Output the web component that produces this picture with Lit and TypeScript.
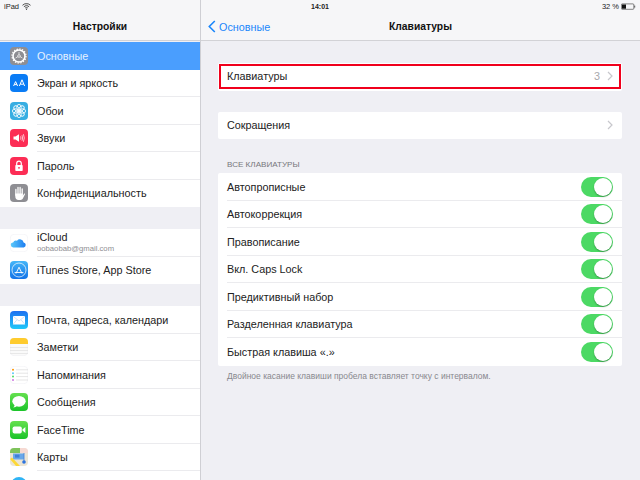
import { LitElement, html, css, svg } from "lit";
import { customElement } from "lit/decorators.js";

const gear = svg`<rect width="18" height="18" rx="4" fill="#8e8e93"/><circle cx="9" cy="9" r="6" fill="none" stroke="#fff" stroke-width="1.6"/><circle cx="9" cy="9" r="7" fill="none" stroke="#fff" stroke-width="1.2" stroke-dasharray="1.4 1.35"/><circle cx="9" cy="9" r="1.3" fill="none" stroke="#fff" stroke-width=".7"/><path d="M9 5v2.7M5.6 11l2.3-1.3M12.4 11l-2.3-1.3" stroke="#fff" stroke-width=".7"/>`;
const display = svg`<rect width="18" height="18" rx="4" fill="#0a7cf5"/><path d="M3.6 12 5.6 7.6 7.600 12M4.400 10.600h2.400M9.400 12 12 5.800 14.600 12M10.400 10.200h3.200" fill="none" stroke="#fff" stroke-width="1"/>`;
const wallpaper = svg`<rect width="18" height="18" rx="4" fill="#37aee2"/><g fill="none" stroke="#fff" stroke-width=".9"><ellipse cx="9" cy="5.400" rx="2.200" ry="3"/><ellipse cx="9" cy="12.600" rx="2.200" ry="3"/><ellipse cx="5.400" cy="9" rx="3" ry="2.200"/><ellipse cx="12.600" cy="9" rx="3" ry="2.200"/><ellipse cx="6.400" cy="6.400" rx="2.200" ry="3" transform="rotate(-45 6.400 6.400)"/><ellipse cx="11.600" cy="6.400" rx="2.200" ry="3" transform="rotate(45 11.600 6.400)"/><ellipse cx="6.400" cy="11.600" rx="2.200" ry="3" transform="rotate(45 6.400 11.600)"/><ellipse cx="11.600" cy="11.600" rx="2.200" ry="3" transform="rotate(-45 11.600 11.600)"/></g>`;
const sounds = svg`<rect width="18" height="18" rx="4" fill="#fc2d55"/><path d="M3.500 7.600h2L9 5.200v7.600L5.500 10.400h-2z" fill="#fff"/><path d="M10.600 7.400q.8 1.600 0 3.200M12 6.200q1.300 2.800 0 5.600M13.400 5.200q1.800 3.800 0 7.600" fill="none" stroke="#fff" stroke-width=".7"/>`;
const lock = svg`<rect width="18" height="18" rx="4" fill="#fc2d55"/><rect x="5.300" y="8" width="7.400" height="6" rx=".8" fill="#fff"/><path d="M6.700 8V6.400a2.300 2.300 0 0 1 4.600 0V8" fill="none" stroke="#fff" stroke-width="1.200"/><circle cx="9" cy="10.800" r=".9" fill="#fc2d55"/>`;
const hand = svg`<rect width="18" height="18" rx="4" fill="#8e8e93"/><g stroke="#fff" stroke-width="1.300" stroke-linecap="round"><path d="M5.900 5.500v5.500M8 3.400v6.500M10.100 3.400v6.500M12.200 5v5.500M6 11l-.1.200"/></g><path d="M5.300 9.500h7.500v2.200l1.300-2c.5-.6 1.200 0 .9.600l-2 4c-.5 1-1.300 1.700-2.500 1.700H8.500c-2 0-3.200-1.400-3.200-3.500z" fill="#fff"/>`;
const cloud = svg`<defs><linearGradient id="cl" x1="0" x2="1"><stop offset="0" stop-color="#5ac8fa"/><stop offset="1" stop-color="#1c7cf0"/></linearGradient></defs><rect x=".25" y=".25" width="17.500" height="17.500" rx="4" fill="#fff" stroke="#ececf0" stroke-width=".5"/><path d="M3.500 13.400a2.500 2.500 0 0 1-.4-5A3.200 3.200 0 0 1 7 6.800a3.700 3.700 0 0 1 6.600 1.700 2.500 2.500 0 0 1 .2 4.900z" fill="url(#cl)"/>`;
const store = svg`<defs><linearGradient id="st" x1="0" x2="0" y1="0" y2="1"><stop offset="0" stop-color="#45b6f8"/><stop offset="1" stop-color="#1273e8"/></linearGradient></defs><rect width="18" height="18" rx="4" fill="url(#st)"/><circle cx="9" cy="9" r="7" fill="none" stroke="#fff" stroke-width=".7"/><path d="M6 12.500 9 6.200l3 6.300M4.600 11.500h8.800" fill="none" stroke="#fff" stroke-width=".9"/>`;
const mail = svg`<defs><linearGradient id="ml" x1="0" x2="0" y1="0" y2="1"><stop offset="0" stop-color="#1d70f0"/><stop offset="1" stop-color="#1ec9fa"/></linearGradient></defs><rect width="18" height="18" rx="4" fill="url(#ml)"/><rect x="3" y="5" width="12" height="8.500" rx=".6" fill="#fff"/><path d="M3.200 5.300 9 10l5.800-4.700M3.200 13.200 7 8.800M14.800 13.200 11 8.800" fill="none" stroke="#a9cff5" stroke-width=".6"/>`;
const notes = svg`<rect x=".25" y=".25" width="17.500" height="17.500" rx="4" fill="#fafafa" stroke="#ececf0" stroke-width=".5"/><path d="M0 4a4 4 0 0 1 4-4h10a4 4 0 0 1 4 4v2H0z" fill="#fecb2e"/><path d="M0 9.500h18M0 12.500h18M0 15.500h18" stroke="#dcdcdc" stroke-width=".6"/>`;
const reminders = svg`<rect x=".25" y=".25" width="17.500" height="17.500" rx="4" fill="#fff" stroke="#ececf0" stroke-width=".5"/><circle cx="3" cy="3.800" r="1" fill="#ff9500"/><circle cx="3" cy="7.200" r="1" fill="#5ac8fa"/><circle cx="3" cy="10.600" r="1" fill="#4cd964"/><circle cx="3" cy="14" r="1" fill="#cc73e1"/><path d="M6 3.800h12M6 7.200h12M6 10.600h12M6 14h12" stroke="#d4d4d4" stroke-width=".6"/>`;
const messages = svg`<defs><linearGradient id="ms" x1="0" x2="0" y1="0" y2="1"><stop offset="0" stop-color="#65e04f"/><stop offset="1" stop-color="#1bc42a"/></linearGradient></defs><rect width="18" height="18" rx="4" fill="url(#ms)"/><ellipse cx="9" cy="8.300" rx="6.700" ry="5.400" fill="#fff"/><path d="M4.800 11.500q-.2 2-1.600 3 2.500-.1 4-1.700z" fill="#fff"/>`;
const facetime = svg`<defs><linearGradient id="ft" x1="0" x2="0" y1="0" y2="1"><stop offset="0" stop-color="#65e04f"/><stop offset="1" stop-color="#1bc42a"/></linearGradient></defs><rect width="18" height="18" rx="4" fill="url(#ft)"/><rect x="2.600" y="5.500" width="9.200" height="7" rx="1.800" fill="#fff"/><path d="M12.400 8.400 15.400 6v6l-3-2.400z" fill="#fff"/>`;
const maps = svg`<rect width="18" height="18" rx="4" fill="#ece5d4"/><path d="M0 4a4 4 0 0 1 4-4h6v5H0z" fill="#7ec35b"/><path d="M10 0h4a4 4 0 0 1 4 4v1h-8z" fill="#f6d9d2"/><path d="M3 5.500h11v6H3z" fill="#6aa8e8"/><path d="M5 6.600h4.500v3H5z" fill="#3f7fd8"/><path d="M2 9.500 10 18H6L0 11z" fill="#fdd835"/><path d="M14 5v8" stroke="#3f7fd8" stroke-width=".8"/><circle cx="14" cy="14" r="1.800" fill="#2d74e0"/>`;
const safari = svg`<rect width="18" height="18" rx="4" fill="#fff"/><circle cx="9" cy="9" r="8" fill="#2fb4f5"/>`;

type SideRow = { label: string; icon: unknown; sub?: string };
const groups: SideRow[][] = [
  [
    { label: "Основные", icon: gear },
    { label: "Экран и яркость", icon: display },
    { label: "Обои", icon: wallpaper },
    { label: "Звуки", icon: sounds },
    { label: "Пароль", icon: lock },
    { label: "Конфиденциальность", icon: hand },
  ],
  [
    { label: "iCloud", icon: cloud, sub: "oobaobab@gmail.com" },
    { label: "iTunes Store, App Store", icon: store },
  ],
  [
    { label: "Почта, адреса, календари", icon: mail },
    { label: "Заметки", icon: notes },
    { label: "Напоминания", icon: reminders },
    { label: "Сообщения", icon: messages },
    { label: "FaceTime", icon: facetime },
    { label: "Карты", icon: maps },
    { label: "", icon: safari },
  ],
];
const toggles = [
  "Автопрописные",
  "Автокоррекция",
  "Правописание",
  "Вкл. Caps Lock",
  "Предиктивный набор",
  "Разделенная клавиатура",
  "Быстрая клавиша «.»",
];
const chevron = html`<svg class="chev" width="6" height="10" viewBox="0 0 6 10"><path d="M1 1l4 4-4 4" fill="none" stroke="#c7c7cc" stroke-width="1.200"/></svg>`;

@customElement("app-root")
export class AppRoot extends LitElement {
  static styles = css`
    :host {
      display: grid;
      grid-template-columns: 200px 1fr;
      position: relative;
      width: 640px;
      height: 480px;
      overflow: hidden;
      font-family: "Liberation Sans", Arial, sans-serif;
      font-size: 10.800px;
      color: #222;
      background: #efeff4;
    }
    .status {
      position: absolute;
      inset: 0 0 auto 0;
      height: 13px;
      display: grid;
      grid-template-columns: 1fr auto 1fr;
      align-items: center;
      font-size: 7.500px;
      color: #222;
      padding: 0 4px;
    }
    .status .l { display: flex; align-items: center; gap: 3px; }
    .status .r { display: flex; align-items: center; justify-content: flex-end; gap: 2px; }
    .time { font-weight: 700; font-size: 7px; }
    .side {
      border-right: 1px solid #cfcfd4;
      box-sizing: border-box;
      width: 201px;
      background: #efeff4;
      display: flex;
      flex-direction: column;
      gap: 22px;
    }
    .head {
      height: 41px;
      box-sizing: border-box;
      background: #f6f6f8;
      border-bottom: 1px solid #d2d2d6;
      padding-top: 13px;
      display: grid;
      align-items: center;
      flex: none;
    }
    .side .head {
      text-align: center;
      font-weight: 700;
      font-size: 10.300px;
      color: #111;
      margin-bottom: -21px;
    }
    .title { font-weight: 700; font-size: 10.300px; color: #111; }
    .sgroup { background: #fff; flex: none; }
    .srow {
      height: 27.500px;
      box-sizing: border-box;
      display: flex;
      align-items: center;
      padding-left: 9.500px;
      gap: 9.500px;
      position: relative;
    }
    .srow.sel { background: #4a9efe; color: #e6f1ff; }
    .srow svg { flex: none; }
    .sep::after {
      content: "";
      position: absolute;
      left: 37px;
      right: 0;
      bottom: 0;
      height: 1px;
      background: #ebebee;
    }
    .two { display: flex; flex-direction: column; gap: 1px; line-height: 11px; }
    .sub { font-size: 7.700px; line-height: 9px; color: #8e8e93; }
    .main { min-width: 0; display: flex; flex-direction: column; margin-left: 1px; }
    .bar {
      grid-template-columns: minmax(0, 1fr) auto minmax(0, 1fr);
      padding-left: 7px;
      padding-right: 7px;
    }
    .back { color: #1a86fb; display: flex; align-items: center; gap: 3px; }
    .content { padding: 22px 18px 0 17px; display: flex; flex-direction: column; }
    .group { background: #fff; border-radius: 2px; position: relative; }
    .row {
      height: 27.500px;
      box-sizing: border-box;
      display: flex;
      align-items: center;
      justify-content: space-between;
      padding: 0 9px;
      position: relative;
    }
    .row.sep::after { left: 9px; }
    .row.first { padding-bottom: 2px; }
    .mark {
      position: absolute;
      inset: 0.500px 1.500px 1.500px 1px;
      border: 2px solid #f0001c;
    }
    .val { display: flex; align-items: center; gap: 7px; color: #a8a8ad; }
    .gap { height: 21px; }
    .label { font-size: 8.100px; color: #77777c; padding: 21px 9px 3.700px; line-height: 9.500px; }
    .foot { font-size: 8.500px; color: #88888e; padding: 6px 9px; line-height: 9.500px; }
    .toggle {
      width: 32px;
      height: 20px;
      border-radius: 10px;
      background: #4cd964;
      display: flex;
      justify-content: flex-end;
      align-items: center;
      padding: 1px;
      box-sizing: border-box;
    }
    .knob {
      width: 18px;
      height: 18px;
      border-radius: 50%;
      background: #fff;
      box-shadow: 0 1px 1.500px rgba(0, 0, 0, 0.3);
    }
  `;

  render() {
    return html`
      <div class="side">
        <div class="head">Настройки</div>
        ${groups.map(
          (g, gi) => html`<div class="sgroup">
            ${g.map(
              (r, i) => html`<div class="srow ${gi === 0 && i === 0 ? "sel" : ""} ${i < g.length - 1 && !(gi === 0 && i === 0) ? "sep" : ""}">
                <svg width="18" height="18" viewBox="0 0 18 18">${r.icon}</svg>
                ${r.sub
                  ? html`<div class="two"><span>${r.label}</span><span class="sub">${r.sub}</span></div>`
                  : html`<span>${r.label}</span>`}
              </div>`
            )}
          </div>`
        )}
      </div>
      <div class="main">
        <div class="head bar">
          <div class="back">
            <svg width="8" height="13" viewBox="0 0 8 13"><path d="M6.800 1 1.300 6.500l5.500 5.500" fill="none" stroke="#1a86fb" stroke-width="1.600"/></svg>
            <span>Основные</span>
          </div>
          <div class="title">Клавиатуры</div>
          <div></div>
        </div>
        <div class="content">
          <div class="group">
            <div class="row first"><span>Клавиатуры</span><span class="val">3 ${chevron}</span></div>
            <div class="mark"></div>
          </div>
          <div class="gap"></div>
          <div class="group">
            <div class="row"><span>Сокращения</span>${chevron}</div>
          </div>
          <div class="label">ВСЕ КЛАВИАТУРЫ</div>
          <div class="group">
            ${toggles.map(
              (t, i) => html`<div class="row ${i < toggles.length - 1 ? "sep" : ""}">
                <span>${t}</span>
                <div class="toggle"><div class="knob"></div></div>
              </div>`
            )}
          </div>
          <div class="foot">Двойное касание клавиши пробела вставляет точку с интервалом.</div>
        </div>
      </div>
      <div class="status">
        <div class="l">
          <span>iPad</span>
          <svg width="9" height="7" viewBox="0 0 9 7"><path d="M.5 2.300a5.600 5.600 0 0 1 8 0M1.900 3.700a3.600 3.600 0 0 1 5.200 0M3.200 5a1.800 1.800 0 0 1 2.600 0" fill="none" stroke="#222" stroke-width=".8"/><circle cx="4.500" cy="6.200" r=".6" fill="#222"/></svg>
        </div>
        <div class="time">14:01</div>
        <div class="r">
          <span>32 %</span>
          <svg width="15" height="7" viewBox="0 0 15 7"><rect x=".4" y=".9" width="12.400" height="5.400" rx=".8" fill="none" stroke="#333" stroke-width=".6"/><rect x="1" y="1.500" width="4" height="4.200" fill="#111"/><rect x="13.200" y="2.600" width="1" height="2" fill="#555"/></svg>
        </div>
      </div>
    `;
  }
}
